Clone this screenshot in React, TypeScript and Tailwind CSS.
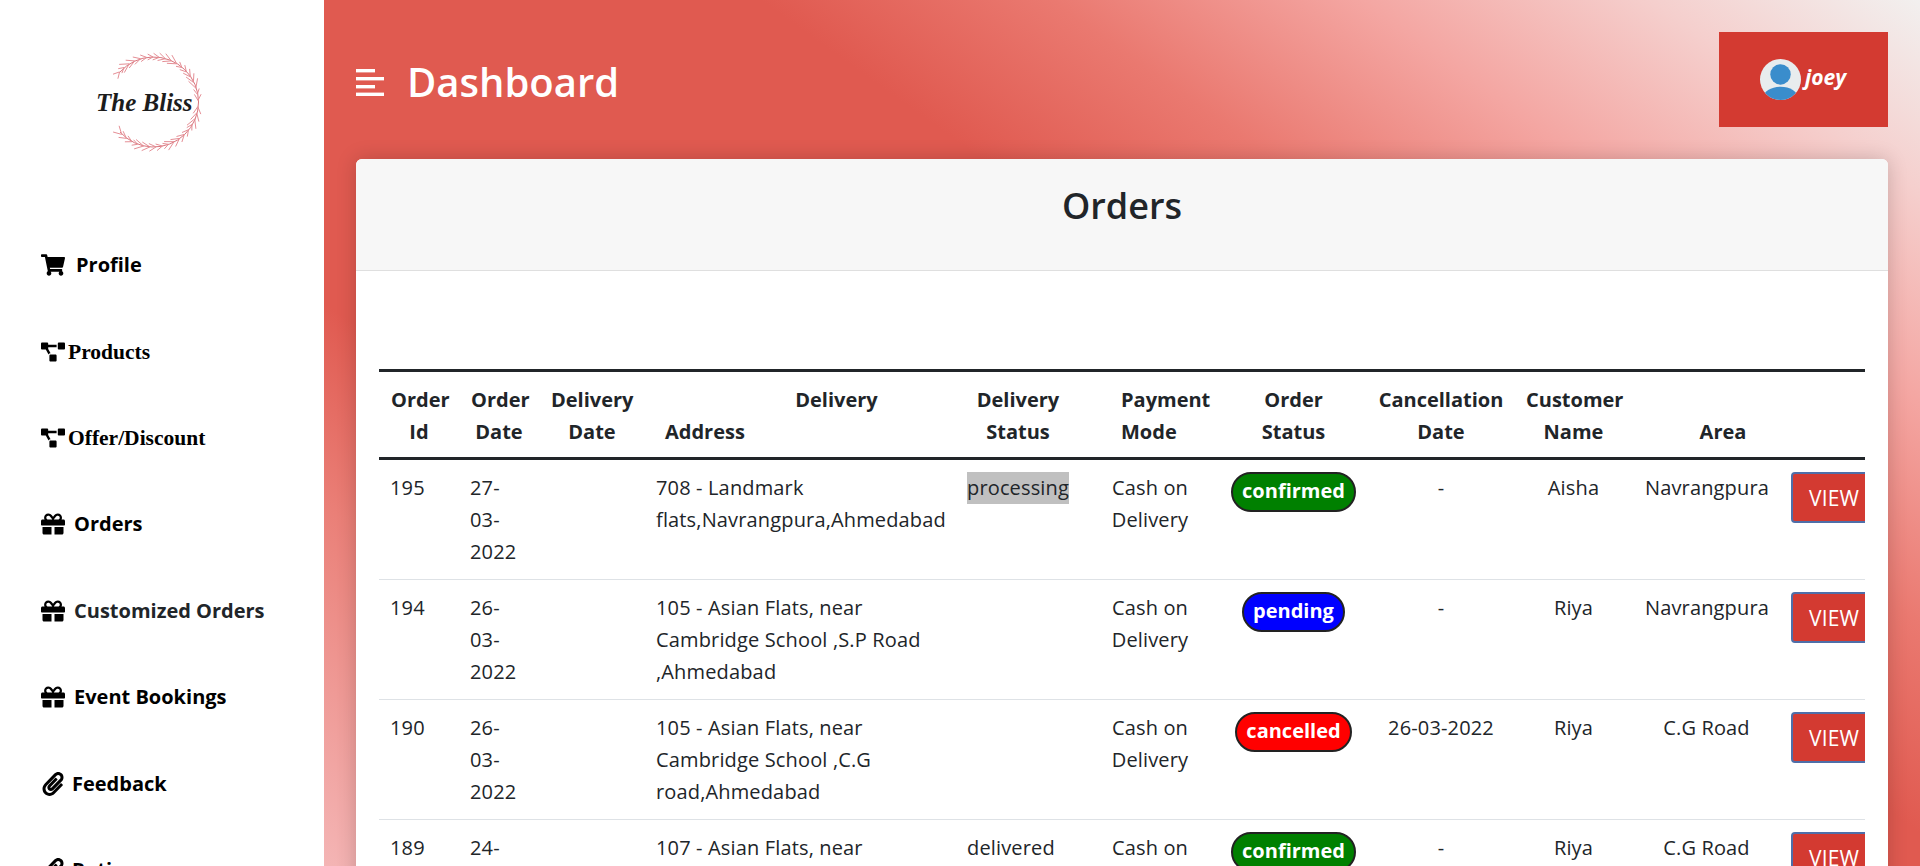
import React from 'react';
import { FaShoppingCart, FaProjectDiagram, FaGift, FaPaperclip } from 'react-icons/fa';

const sans = "font-['Open_Sans','Noto_Sans',sans-serif]";

const navItems = [
  { label: 'Profile', icon: FaShoppingCart, gap: 'ml-[11px]', text: 'font-bold' },
  { label: 'Products', icon: FaProjectDiagram, gap: 'ml-[3px]', text: "font-bold text-[21.5px] font-['Liberation_Serif',serif]" },
  { label: 'Offer/Discount', icon: FaProjectDiagram, gap: 'ml-[3px]', text: "font-bold text-[21.5px] font-['Liberation_Serif',serif]" },
  { label: 'Orders', icon: FaGift, gap: 'ml-[9px]', text: 'font-bold' },
  { label: 'Customized Orders', icon: FaGift, gap: 'ml-[9px]', text: 'font-bold text-[#212529]' },
  { label: 'Event Bookings', icon: FaGift, gap: 'ml-[9px]', text: 'font-bold' },
  { label: 'Feedback', icon: FaPaperclip, gap: 'ml-[7px]', text: 'font-bold' },
  { label: 'Ratings', icon: FaPaperclip, gap: 'ml-[7px]', text: 'font-bold' },
];

const orders = [
  { id: 195, date: ['27-', '03-', '2022'], address: '708 - Landmark flats,Navrangpura,Ahmedabad', delivery: 'processing', status: 'confirmed', cancelled: '-', customer: 'Aisha', area: 'Navrangpura' },
  { id: 194, date: ['26-', '03-', '2022'], address: '105 - Asian Flats, near Cambridge School ,S.P Road ,Ahmedabad', delivery: '', status: 'pending', cancelled: '-', customer: 'Riya', area: 'Navrangpura' },
  { id: 190, date: ['26-', '03-', '2022'], address: '105 - Asian Flats, near Cambridge School ,C.G road,Ahmedabad', delivery: '', status: 'cancelled', cancelled: '26-03-2022', customer: 'Riya', area: 'C.G Road' },
  { id: 189, date: ['24-', '03-', '2022'], address: '107 - Asian Flats, near Cambridge School ,C.G road,Ahmedabad', delivery: 'delivered', status: 'confirmed', cancelled: '-', customer: 'Riya', area: 'C.G Road' },
];

const badgeColor: Record<string, string> = {
  confirmed: 'bg-[#008000]',
  pending: 'bg-[#0000ff]',
  cancelled: 'bg-[#ff0000]',
};

const Logo = () => {
  const cx = 153;
  const cy = 102;
  const r = 45;
  const leaves: string[] = [];
  // two branches that grow from the right side towards the open left side
  for (let a = -48; a <= 228; a += 8) {
    const t = (a * Math.PI) / 180;
    const x = cx + r * Math.sin(t);
    const y = cy - r * Math.cos(t);
    const dir = a < 90 ? t + Math.PI : t;
    const len = 6 + (Math.abs(a * 7) % 5);
    for (const side of [-0.5, 0.5]) {
      const ex = x + len * Math.cos(dir + side);
      const ey = y + len * Math.sin(dir + side);
      leaves.push(`M${x.toFixed(1)} ${y.toFixed(1)}L${ex.toFixed(1)} ${ey.toFixed(1)}`);
    }
  }
  return (
    <svg viewBox="90 45 130 115" className="w-[130px] h-[115px]">
      <path d="M120 72A45 45 0 1 1 120 132" fill="none" stroke="#d9757d" strokeWidth="1" />
      <path d={leaves.join('')} fill="none" stroke="#e58f96" strokeWidth="1" />
      <text x="96" y="111" fontFamily="'Liberation Serif', serif" fontStyle="italic" fontWeight="700" fontSize="25" fill="#1c1c1c">
        The Bliss
      </text>
    </svg>
  );
};

const Sidebar = () => (
  <aside className="w-[324px] shrink-0 bg-white">
    <div className="h-[222px] pl-[90px] pt-[45px]">
      <Logo />
    </div>
    <nav className="pl-[41px] text-[20px] leading-[30px] text-black">
      {navItems.map((item) => (
        <div key={item.label} className="h-[86.4px] flex items-center">
          <item.icon className="text-[24px] shrink-0" />
          <span className={`${item.gap} ${item.text}`}>{item.label}</span>
        </div>
      ))}
    </nav>
  </aside>
);

const Header = () => (
  <header className="h-[159px] flex items-start justify-between">
    <div className="flex items-center h-[164px]">
      <svg viewBox="0 0 28 27" className="w-[28px] h-[27px] mr-[23px] fill-white">
        <rect x="0" y="0" width="19" height="3.4" />
        <rect x="0" y="8" width="28" height="3.4" />
        <rect x="0" y="16" width="19" height="3.4" />
        <rect x="0" y="23.6" width="28" height="3.4" />
      </svg>
      <h1 className="text-[40px] font-semibold text-white">Dashboard</h1>
    </div>
    <div className="mt-[32px] w-[169px] h-[95px] bg-[#d33a31] flex items-center pl-[41px]">
      <svg viewBox="0 0 40 40" className="w-[41px] h-[41px]">
        <clipPath id="av">
          <circle cx="20" cy="20" r="20" />
        </clipPath>
        <circle cx="20" cy="20" r="20" fill="#e8ecee" />
        <g clipPath="url(#av)" fill="#3a8dcc">
          <circle cx="20" cy="15" r="10" />
          <ellipse cx="20" cy="38" rx="17" ry="11" />
        </g>
      </svg>
      <span className="ml-[4px] mb-[4px] text-[21px] font-bold italic text-white">joey</span>
    </div>
  </header>
);

const OrdersTable = () => (
  <div className="overflow-hidden">
    <table className="table-fixed w-[1530px] border-collapse text-[20px] leading-[32px] text-[#212529]">
      <colgroup>
        <col className="w-[80px]" />
        <col className="w-[80px]" />
        <col className="w-[106px]" />
        <col className="w-[310px]" />
        <col className="w-[126px]" />
        <col className="w-[138px]" />
        <col className="w-[149px]" />
        <col className="w-[146px]" />
        <col className="w-[119px]" />
        <col className="w-[147px]" />
        <col className="w-[129px]" />
      </colgroup>
      <thead>
        <tr className="border-t-[3px] border-b-[3px] border-[#212529] font-bold text-center align-bottom">
          <th className="px-3 pt-[12px] pb-[9px]">Order Id</th>
          <th className="px-3 pt-[12px] pb-[9px]">Order Date</th>
          <th className="px-3 pt-[12px] pb-[9px]">Delivery Date</th>
          <th className="px-3 pt-[12px] pb-[9px]">
            <div className="pl-[73px] text-center">Delivery</div>
            <div className="pl-[8px] text-left">Address</div>
          </th>
          <th className="px-3 pt-[12px] pb-[9px]">Delivery Status</th>
          <th className="pl-[40px] pt-[12px] pb-[9px] text-left">Payment Mode</th>
          <th className="px-3 pt-[12px] pb-[9px]">Order Status</th>
          <th className="px-1 pt-[12px] pb-[9px]">Cancellation Date</th>
          <th className="px-3 pt-[12px] pb-[9px]">Customer Name</th>
          <th className="pl-[45px] pr-3 pt-[12px] pb-[9px]">Area</th>
          <th />
        </tr>
      </thead>
      <tbody className="tracking-[0.15px]">
        {orders.map((o) => (
          <tr key={o.id} className="border-b border-[#dee2e6] align-top">
            <td className="pl-[11px] pr-3 pt-3 pb-[11px]">{o.id}</td>
            <td className="pl-[11px] pr-3 pt-3 pb-[11px]">
              {o.date.map((part) => (
                <div key={part}>{part}</div>
              ))}
            </td>
            <td className="p-3" />
            <td className="pl-[11px] pr-3 pt-3 pb-[11px]">{o.address}</td>
            <td className="px-3 pt-3 pb-[11px]">
              {o.delivery === 'processing' ? <span className="inline-block align-top bg-[#c0c0c0]">{o.delivery}</span> : o.delivery}
            </td>
            <td className="px-3 pt-3 pb-[11px] text-center">Cash on Delivery</td>
            <td className="px-3 pt-3 pb-[11px] text-center">
              <span className={`${badgeColor[o.status]} inline-block align-top h-[40px] px-[9px] rounded-[20px] border-2 border-[#222] text-white font-bold leading-[34px] tracking-normal`}>
                {o.status}
              </span>
            </td>
            <td className="px-0 pt-3 pb-[11px] text-center">{o.cancelled}</td>
            <td className="px-3 pt-3 pb-[11px] text-center">{o.customer}</td>
            <td className="px-3 pt-3 pb-[11px] text-center">{o.area}</td>
            <td className="pl-[11px] pt-3 pb-[11px]">
              <button className="block h-[51px] w-[86px] rounded-[4px] border-2 border-[#4f6ea8] bg-[#d33a31] text-white text-[21px]">VIEW</button>
            </td>
          </tr>
        ))}
      </tbody>
    </table>
  </div>
);

export default function App() {
  return (
    <div className={`flex h-screen overflow-hidden ${sans}`}>
      <Sidebar />
      <main className="flex-1 min-w-0 px-[32px] bg-[linear-gradient(35.7deg,#f4b5b5_0%,#ea7f77_18%,#e05a50_28%,#e05a50_58.6%,#ea7970_69%,#f4a6a2_80%,#f5cfcd_90.4%,#f2f0ef_100%)]">
        <Header />
        <section className="bg-white rounded-[6px] shadow-[0_0_20px_rgba(0,0,0,0.18)] overflow-hidden">
          <div className="h-[112px] pb-[17px] bg-[#f7f7f7] border-b border-[#dfdfdf] flex items-center justify-center">
            <h2 className="text-[36px] font-semibold text-[#212529]">Orders</h2>
          </div>
          <div className="px-[23px] pt-[98px]">
            <OrdersTable />
          </div>
        </section>
      </main>
    </div>
  );
}
